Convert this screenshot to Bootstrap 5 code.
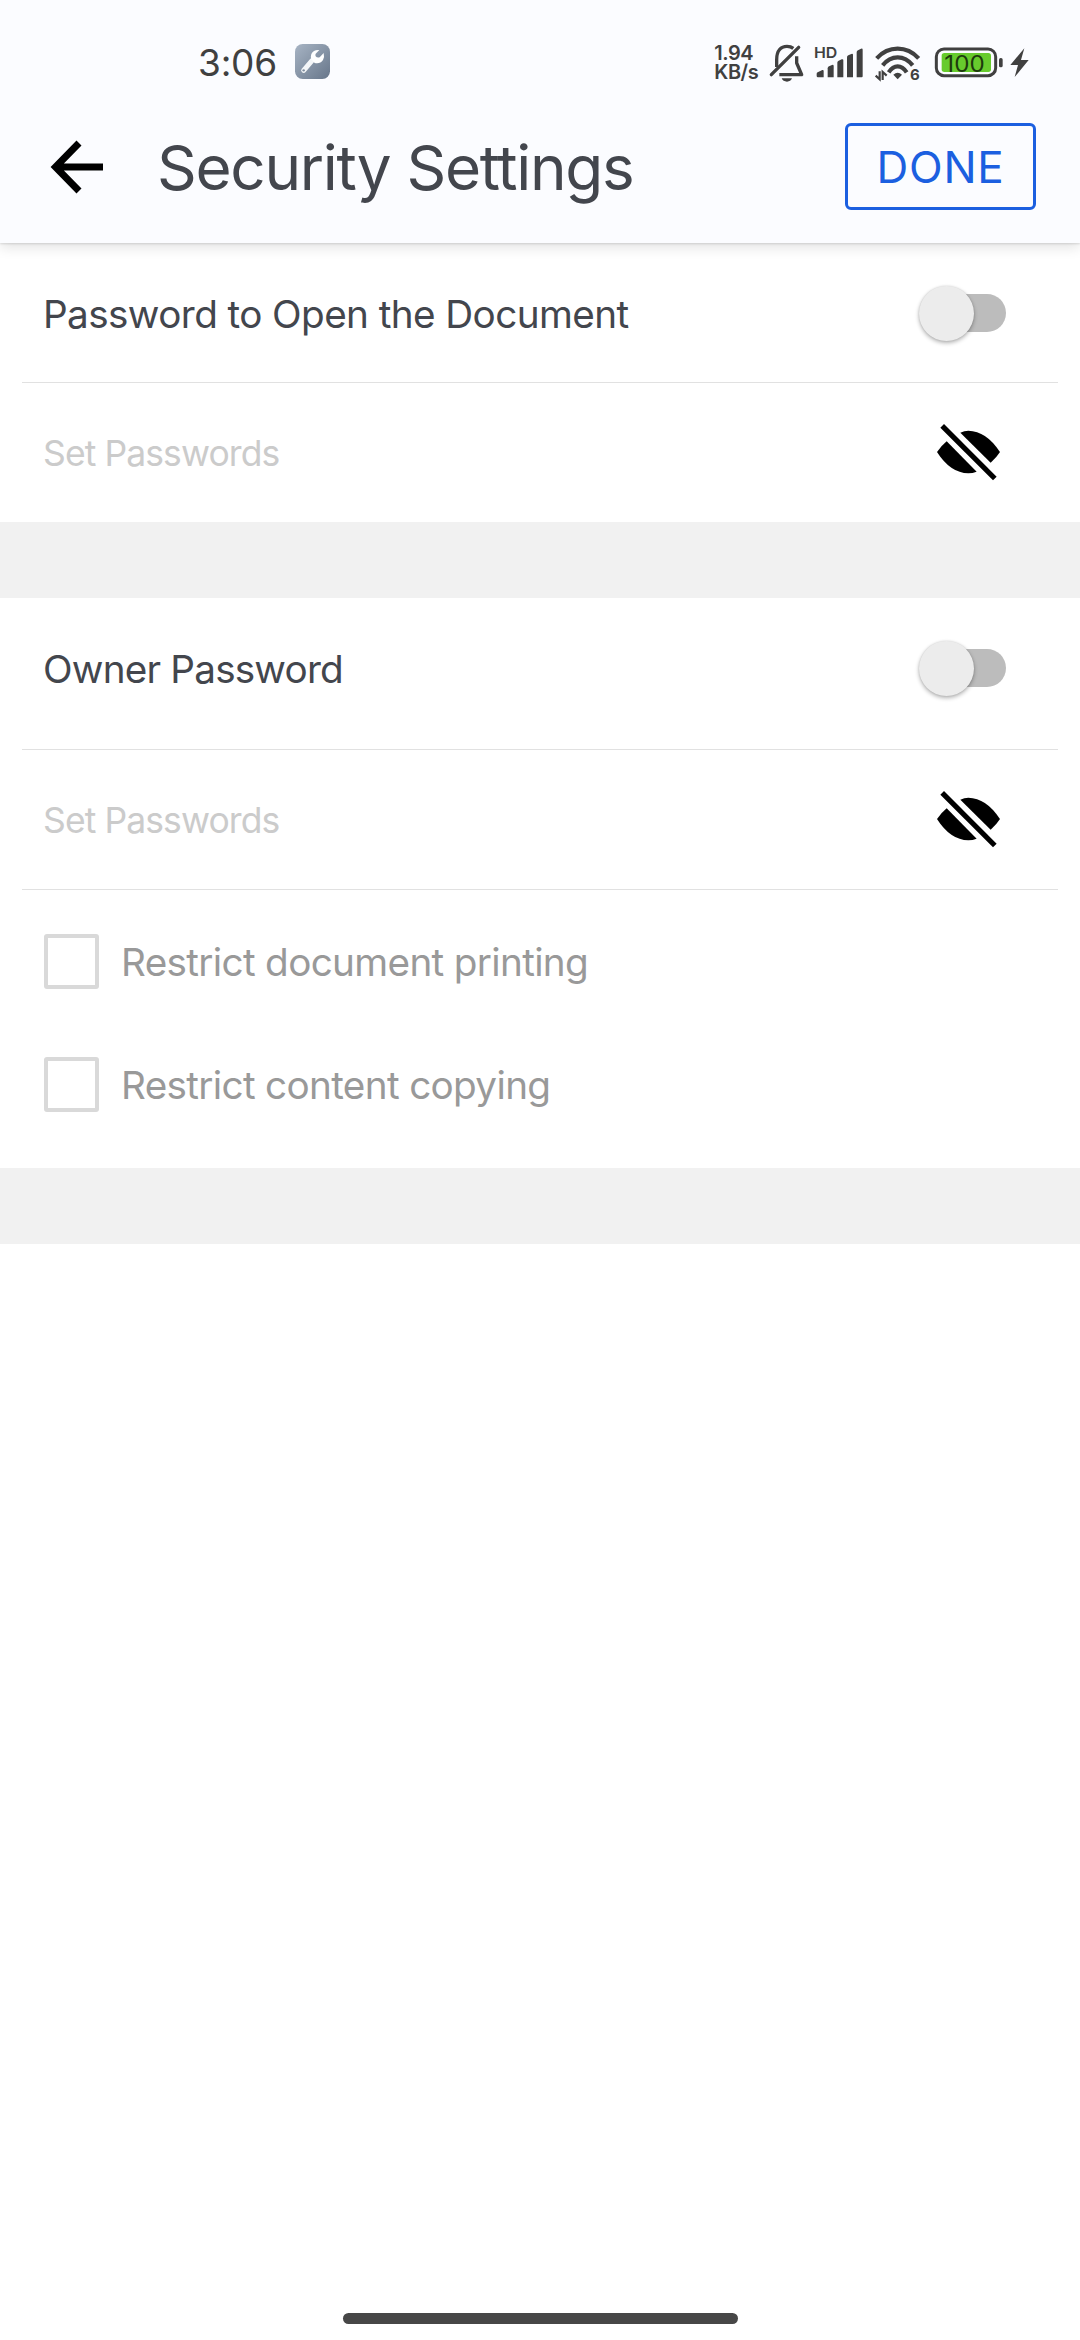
<!DOCTYPE html>
<html lang="en">
<head>
<meta charset="utf-8">
<meta name="viewport" content="width=device-width, initial-scale=1">
<title>Security Settings</title>
<link href="https://cdn.jsdelivr.net/npm/bootstrap@5.3.0/dist/css/bootstrap.min.css" rel="stylesheet">
<script src="https://cdn.jsdelivr.net/npm/bootstrap@5.3.0/dist/js/bootstrap.bundle.min.js"></script>
<style>
  body { font-family: Inter, "Noto Sans", sans-serif; color: #43464d; background: #fff; }
  svg { display: block; flex: none; overflow: visible; }
  .app-screen { width: 1080px; height: 2340px; overflow: hidden; }
  .app-header { height: 243px; background: #fbfcff; box-shadow: 0 1px 2px rgba(0,0,0,.12), 0 4px 13px rgba(0,0,0,.12); z-index: 1; }
  .status-bar { height: 90px; padding: 33px 49px 0 198px; color: #404040; line-height: 1; }
  .clock { font-size: 37px; letter-spacing: -.2px; width: 97px; padding-top: 2px; }
  .net-speed { font-size: 20px; font-weight: 600; line-height: 19px; letter-spacing: -.5px; width: 54px; padding-top: 2px; }
  .wifi-icon { margin-left: 8px; }
  .battery-icon { margin-left: 10.700px; }
  .bolt-icon { margin-left: 4px; }
  .tool-bar { height: 153px; padding: 0 44px 0 50px; }
  .screen-title { font-size: 62px; line-height: 1; letter-spacing: -1.3px; font-weight: 400; margin-left: 53px; padding-top: 2px; }
  .btn-done { width: 191px; height: 87px; border: 3px solid #1b5fe0; border-radius: 6px; color: #1b5fe0; font-size: 44px; letter-spacing: .8px; line-height: 1; padding: 0; }
  .setting-row { height: 139px; padding: 1px 74px 0 43px; font-size: 38.7px; line-height: 1; letter-spacing: -.6px; }
  .setting-row > span:first-child, .hint-row > span, .option-row > span { padding-top: 2px; }
  .tall-row { height: 151px; padding-bottom: 12px; letter-spacing: -.8px; }
  .rule { height: 1px; margin: 0 22px; background: #e1e1e1; }
  .hint-row { height: 139px; padding: 0 79px 0 43px; font-size: 35.5px; letter-spacing: -.9px; color: #cbcbcb; line-height: 1; }
  .band { height: 76px; background: #f1f1f1; }
  .toggle { width: 89px; height: 55px; padding-left: 15px; }
  .toggle-track { width: 74px; height: 38px; border-radius: 19px; background: #bcbcbc; }
  .toggle-thumb { width: 55px; height: 55px; border-radius: 50%; background: #ececec; left: 2px; top: 0; box-shadow: 0 2px 4px rgba(0,0,0,.3), 0 0 2px rgba(0,0,0,.12); }
  .option-list { height: 278px; padding: 44px 44px 0; gap: 68px; }
  .option-row { gap: 22px; height: 55px; font-size: 38.7px; letter-spacing: -.67px; color: #999; line-height: 1; }
  .option-box { width: 55px; height: 55px; margin: 0; border: 4px solid #d9d9d9; background: #fff; flex: none; }
  .option-box.form-check-input[type=checkbox] { border-radius: 3px; }
  .home-bar { width: 395px; height: 11px; border-radius: 6px; background: #474747; margin-bottom: 16px; }
</style>
</head>
<body>
<svg width="0" height="0" class="position-absolute" aria-hidden="true">
  <symbol id="eye-off" viewBox="165 460 195 175">
    <path d="M238 489Q250 483 262 483Q316 484 357 547Q347 563 329 579Z"/>
    <path d="M168 547Q180 529 197 515L287 606Q275 611 262 611Q208 610 168 547Z"/>
    <path d="M189 463L347 621L336 632L178 474Z"/>
  </symbol>
</svg>
<div class="app-screen d-flex flex-column">
  <header class="app-header position-relative flex-shrink-0">
    <div class="status-bar d-flex align-items-center">
      <div class="clock">3:06</div>
      <svg width="35" height="35" viewBox="345 42 105 105">
        <defs><linearGradient id="tile" x1="0" y1="0" x2="1" y2="1"><stop offset="0" stop-color="#a7b4c4"/><stop offset="1" stop-color="#67768a"/></linearGradient></defs>
        <rect x="345" y="42" width="105" height="105" rx="23" fill="url(#tile)"/>
        <path d="M396 92L371 121" stroke="#f4f6f8" stroke-width="15" stroke-linecap="round"/>
        <path d="M418 60Q401 58 394 72Q391 80 394 88L404 99Q420 103 429 90Q434 81 431 69L419 82Q411 84 407 79Q405 74 407 71Z" fill="#fff"/>
        <circle cx="371" cy="121" r="3.5" fill="#7d8b9c"/>
      </svg>
      <div class="d-flex align-items-center ms-auto">
        <div class="net-speed">1.94<br>KB/s</div>
        <svg width="37" height="40" viewBox="205 33 111 120" fill="none" stroke="#404040" stroke-width="10">
          <path d="M231 108V86C231 58 244 46 262 46C270 46 276 48 281 52M291 76V96L306 131H239" stroke-linejoin="round"/>
          <path d="M215 131L297 49" stroke-width="10" stroke-linecap="round"/>
          <path d="M246 142H277Q273 152 262 152Q250 152 246 142Z" fill="#404040" stroke="none"/>
        </svg>
        <svg class="ms-2" width="52" height="40" viewBox="340 33 156 120" fill="#404040">
          <text x="343" y="82" font-size="44" font-weight="600" textLength="70" lengthAdjust="spacingAndGlyphs">HD</text>
          <path d="M351 128Q351 125 354 124L368 117Q372 116 372 120V139H355Q351 139 351 135Z"/>
          <path d="M384 112Q384 108 388 106L397 102Q402 100 402 105V139H384Z"/>
          <path d="M413 95Q413 91 417 89L426 85Q431 83 431 88V139H413Z"/>
          <path d="M442 79Q442 75 446 73L455 69Q460 67 460 72V139H442Z"/>
          <path d="M471 64Q471 60 475 58L484 53Q489 51 489 56V136Q489 139 486 139H471Z"/>
        </svg>
        <svg class="wifi-icon" width="48" height="40" viewBox="40 33 144 120" fill="none" stroke="#404040" stroke-width="12.500">
          <path d="M51 82Q78 53 114 53T177 82M69 103Q88 79 114 79T159 103M87 124Q99 106 114 106T141 124"/>
          <path d="M101 131Q114 120 127 131L114 145Z" fill="#404040" stroke="none"/>
          <path d="M48 134L60 145V121M81 134L69 123V147" stroke-width="6.500"/>
          <text x="151" y="147" font-size="45" font-weight="700" fill="#404040" stroke="none">6</text>
        </svg>
        <svg class="battery-icon" width="72" height="40" viewBox="216 33 216 120">
          <rect x="229" y="54" width="178" height="80" rx="23" fill="none" stroke="#404040" stroke-width="9"/>
          <rect x="245" y="66" width="148" height="57" rx="8" fill="#67cb2d"/>
          <rect x="417" y="81" width="11" height="28" rx="5" fill="#404040"/>
          <text x="253" y="122" font-size="69" fill="#1d3a0d" textLength="121" lengthAdjust="spacingAndGlyphs">100</text>
        </svg>
        <svg class="bolt-icon" width="23" height="40" viewBox="444 33 69 120" fill="#404040"><path d="M493 52L451 102H474L464 138L506 87H483Z"/></svg>
      </div>
    </div>
    <div class="tool-bar d-flex align-items-center">
      <svg width="54" height="54" viewBox="0 0 54 54" fill="none" stroke="#000" stroke-width="7"><path d="M53 27H7M29 3L5.500 27L29 51"/></svg>
      <h1 class="screen-title mb-0">Security Settings</h1>
      <button type="button" class="btn btn-done ms-auto">DONE</button>
    </div>
  </header>
  <section>
    <div class="setting-row d-flex align-items-center justify-content-between">
      <span>Password to Open the Document</span>
      <span class="toggle position-relative d-flex align-items-center"><span class="toggle-track"></span><span class="toggle-thumb position-absolute"></span></span>
    </div>
    <div class="rule"></div>
    <div class="hint-row d-flex align-items-center justify-content-between">
      <span>Set Passwords</span>
      <svg width="65" height="58.300"><use href="#eye-off"/></svg>
    </div>
  </section>
  <div class="band flex-shrink-0"></div>
  <section>
    <div class="setting-row tall-row d-flex align-items-center justify-content-between">
      <span>Owner Password</span>
      <span class="toggle position-relative d-flex align-items-center"><span class="toggle-track"></span><span class="toggle-thumb position-absolute"></span></span>
    </div>
    <div class="rule"></div>
    <div class="hint-row d-flex align-items-center justify-content-between">
      <span>Set Passwords</span>
      <svg width="65" height="58.300"><use href="#eye-off"/></svg>
    </div>
    <div class="rule"></div>
    <div class="option-list d-flex flex-column">
      <label class="option-row d-flex align-items-center"><input type="checkbox" class="form-check-input option-box"><span>Restrict document printing</span></label>
      <label class="option-row d-flex align-items-center"><input type="checkbox" class="form-check-input option-box"><span>Restrict content copying</span></label>
    </div>
  </section>
  <div class="band flex-shrink-0"></div>
  <div class="home-bar mt-auto mx-auto flex-shrink-0"></div>
</div>
</body>
</html>
